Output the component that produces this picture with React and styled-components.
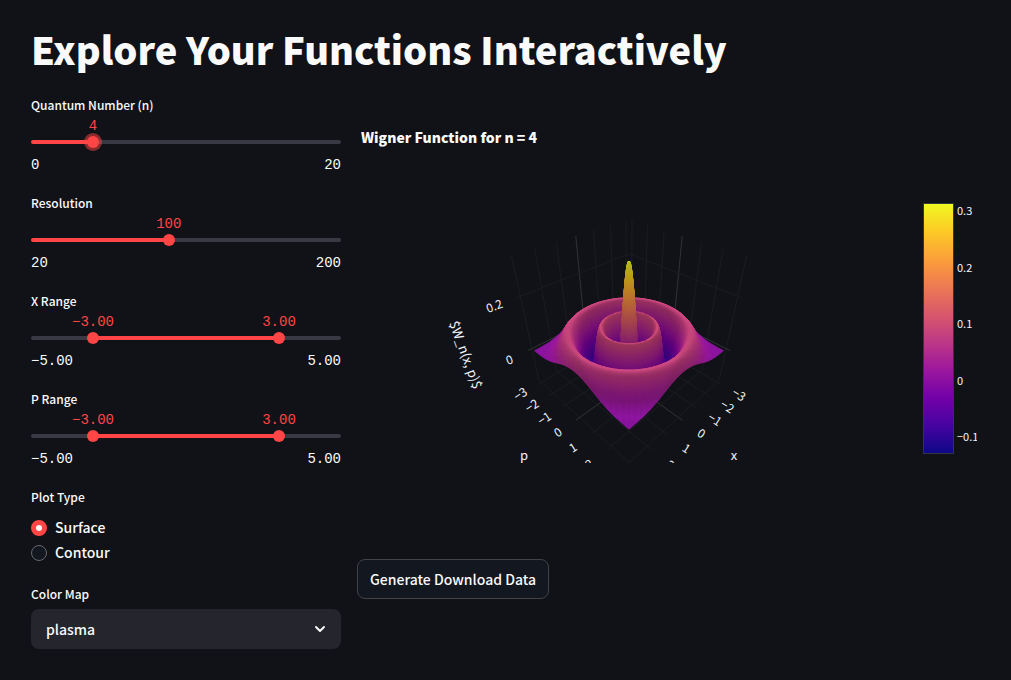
import React, { useMemo, useState } from 'react';
import styled, { createGlobalStyle, css } from 'styled-components';
import { ChevronDown } from 'lucide-react';

const GlobalStyle = createGlobalStyle`
  * {
    box-sizing: border-box;
  }
  body {
    margin: 0;
    background: #111217;
    color: #fafafa;
    font-family: "Noto Sans CJK SC", "Noto Sans", sans-serif;
    font-size: 14px;
    font-weight: 500;
  }
`;

const Page = styled.main`
  padding: 19px 34px 28px 31px;
`;

const Title = styled.h1`
  margin: 0 0 15px;
  font-size: 38px;
  font-weight: 900;
  line-height: 60px;
`;

const Columns = styled.div`
  display: grid;
  grid-template-columns: 1fr 2fr;
  gap: 16px;
`;

const Controls = styled.form`
  display: flex;
  flex-direction: column;
  gap: 18px;
`;

const Field = styled.div`
  display: flex;
  flex-direction: column;
`;

const labelStyle = css`
  padding: 0;
  font-size: 12px;
  line-height: 22px;
`;

const Label = styled.label`
  ${labelStyle}
`;

const Group = styled.fieldset`
  margin: 0;
  padding: 0;
  border: 0;
`;

const Legend = styled.legend`
  ${labelStyle}
`;

const Values = styled.div`
  position: relative;
  height: 20px;
`;

const Value = styled.output`
  position: absolute;
  top: 0;
  transform: translateX(-50%);
  color: #ff4545;
  font-family: "Liberation Mono", monospace;
  font-size: 14px;
  line-height: 20px;
`;

const Rail = styled.div`
  position: relative;
  height: 12px;
`;

const Track = styled.div`
  height: 4px;
  margin-top: 4px;
  border-radius: 2px;
`;

const Range = styled.input`
  position: absolute;
  top: 0;
  left: -6px;
  width: calc(100% + 12px);
  height: 12px;
  margin: 0;
  appearance: none;
  background: transparent;
  outline: none;
  pointer-events: none;

  &::-webkit-slider-thumb {
    appearance: none;
    width: 12px;
    height: 12px;
    border-radius: 50%;
    background: #ff4545;
    box-shadow: ${(p) => (p.$active ? '0 0 0 3px rgba(255, 69, 69, 0.5)' : 'none')};
    cursor: pointer;
    pointer-events: auto;
  }
`;

const Bounds = styled.div`
  display: flex;
  justify-content: space-between;
  margin-top: 8px;
  font-family: "Liberation Mono", monospace;
  font-size: 14px;
  line-height: 18px;
`;

const Option = styled.label`
  display: flex;
  align-items: center;
  gap: 8px;
  line-height: 25px;
  cursor: pointer;
`;

const Options = styled.div`
  padding-top: 7px;
`;

const Radio = styled.input`
  appearance: none;
  width: 16px;
  height: 16px;
  margin: 0;
  border: 1px solid #65666b;
  border-radius: 50%;
  background: #131720;

  &:checked {
    border: 5px solid #ff4545;
    background: #fafafa;
  }
`;

const SelectBox = styled.div`
  display: grid;
  align-items: center;
  margin-top: 4px;

  > * {
    grid-area: 1 / 1;
  }

  svg {
    justify-self: end;
    margin-right: 13px;
    pointer-events: none;
  }
`;

const Select = styled.select`
  appearance: none;
  width: 100%;
  height: 40px;
  padding: 0 15px;
  border: 0;
  border-radius: 8px;
  background: #24252d;
  color: inherit;
  font: inherit;
`;

const Output = styled.section`
  min-width: 0;
`;

const ChartTitle = styled.h2`
  margin: 31px 0 44px 4px;
  font-size: 14px;
  font-weight: 900;
  line-height: 24px;
`;

const Chart = styled.div`
  display: flex;
  margin-bottom: 96px;
`;

const Scene = styled.svg`
  flex: 1;
  min-width: 0;
  height: 270px;
  overflow: hidden;
  fill: #f2f5fa;
  font-weight: 400;
`;

const ColorBar = styled.svg`
  width: 76px;
  height: 270px;
  fill: #f2f5fa;
  font-size: 11px;
  font-weight: 400;
`;

const Button = styled.button`
  height: 40px;
  padding: 0 12px;
  border: 1px solid #414349;
  border-radius: 8px;
  background: #131720;
  color: inherit;
  font: inherit;
  cursor: pointer;
`;

const COLOR_MAPS = {
  plasma: ['0d0887', '46039f', '7201a8', '9c179e', 'bd3786', 'd8576b', 'ed7953', 'fb9f3a', 'fdca26', 'f0f921'],
  viridis: ['440154', '482878', '3e4989', '31688e', '26828e', '1f9e89', '35b779', '6ece58', 'b5de2b', 'fde725'],
};

const colorAt = (stops, t, light = 1, shine = 0) => {
  const pos = Math.min(Math.max(t, 0), 1) * (stops.length - 1);
  const i = Math.min(Math.floor(pos), stops.length - 2);
  const channel = (c) => {
    const a = parseInt(stops[i].slice(c, c + 2), 16);
    const b = parseInt(stops[i + 1].slice(c, c + 2), 16);
    return Math.min(255, Math.round((a + (b - a) * (pos - i)) * light + shine));
  };
  return `rgb(${channel(0)},${channel(2)},${channel(4)})`;
};

const wigner = (n, x, p) => {
  const r2 = x * x + p * p;
  const u = 2 * r2;
  let prev = 1;
  let cur = n === 0 ? 1 : 1 - u;
  for (let k = 1; k < n; k++) {
    [prev, cur] = [cur, ((2 * k + 1 - u) * cur - k * prev) / (k + 1)];
  }
  return ((n % 2 ? -1 : 1) / Math.PI) * Math.exp(-r2) * cur;
};

// perspective camera at (1.25, 1.25, 1.25) looking at the middle of a unit box
const EYE = 1.25 * Math.sqrt(3);
const FOCAL = 135 / Math.tan(Math.PI / 8);
const FILL = 0.935;

const project = (x, y, z) => {
  const s = FOCAL / (EYE - (x + y + z) / Math.sqrt(3));
  return [(s * (y - x)) / Math.SQRT2, (-s * (2 * z - x - y)) / Math.sqrt(6)];
};

const toPoints = (corners) => corners.map((c) => c.map((v) => v.toFixed(2)).join(',')).join(' ');

const buildSurface = (n, size, xRange, pRange) => {
  // u and v run from 0 to 1 over the two ranges
  const at = (u, v) =>
    wigner(n, xRange[0] + (xRange[1] - xRange[0]) * u, pRange[0] + (pRange[1] - pRange[0]) * v);
  let min = Infinity;
  let max = -Infinity;
  for (let i = 0; i < size; i++) {
    for (let j = 0; j < size; j++) {
      const w = at(i / (size - 1), j / (size - 1));
      min = Math.min(min, w);
      max = Math.max(max, w);
    }
  }
  return { at, size, min, max };
};

const Line = ({ from, to, zero }) => {
  const a = project(...from);
  const b = project(...to);
  return (
    <line x1={a[0]} y1={a[1]} x2={b[0]} y2={b[1]} stroke={zero ? '#303235' : '#1b1c20'} strokeWidth={1} />
  );
};

const TickText = ({ at, angle, size = 12, children }) => (
  <text
    transform={`translate(${at[0].toFixed(1)} ${at[1].toFixed(1)}) rotate(${angle})`}
    textAnchor="middle"
    dy="4"
    fontSize={size}
  >
    {children}
  </text>
);

const WignerPlot = ({ surface, stops, xRange, pRange, flat }) => {
  const { at, size, min, max } = surface;
  const level = (w) => ((w - (min + max) / 2) / (max - min)) * FILL;

  const cells = useMemo(() => {
    const list = [];
    const addCell = (u, v, d) => {
      const w = [at(u, v), at(u + d, v), at(u + d, v + d), at(u, v + d)];
      const z = w.map(level);
      const step = d * FILL;
      const x = (u - 0.5) * FILL;
      const y = (v - 0.5) * FILL;
      const corners = [[x, y], [x + step, y], [x + step, y + step], [x, y + step]];
      const dx = (z[1] + z[2] - z[0] - z[3]) / (2 * step);
      const dy = (z[2] + z[3] - z[0] - z[1]) / (2 * step);
      const up = Math.max(0, (dx + dy + 2) / Math.sqrt(6) / Math.hypot(dx, dy, 1));
      const mean = (w[0] + w[1] + w[2] + w[3]) / 4;
      list.push({
        points: toPoints(corners.map(([a, b], k) => (flat ? [a * 260, -b * 260] : project(a, b, z[k])))),
        color: colorAt(
          stops,
          (mean - min) / (max - min),
          flat ? 1 : Math.min(1, 0.75 + 0.4 * up),
          flat ? 0 : 8 * up
        ),
      });
    };

    const step = 1 / (size - 1);
    for (let i = 0; i < size - 1; i++) {
      for (let j = 0; j < size - 1; j++) {
        const u = i * step;
        const v = j * step;
        const z = [at(u, v), at(u + step, v), at(u + step, v + step), at(u, v + step)].map(level);
        // steep cells are split so that their colour stays smooth
        const rise = (Math.max(...z) - Math.min(...z)) * 150;
        const parts = flat ? 1 : Math.min(5, Math.max(1, Math.ceil(rise / 2)));
        for (let a = 0; a < parts; a++) {
          for (let b = 0; b < parts; b++) {
            addCell(u + (a * step) / parts, v + (b * step) / parts, step / parts);
          }
        }
      }
    }
    return list;
  }, [surface, stops, flat]);

  const ticksOf = (range) => {
    const out = [];
    for (let t = Math.ceil(range[0]); t <= range[1]; t++) {
      out.push({ t, v: ((t - range[0]) / (range[1] - range[0]) - 0.5) * FILL });
    }
    return out;
  };
  const xTicks = ticksOf(xRange);
  const pTicks = ticksOf(pRange);
  const zTicks = [-0.2, 0, 0.2].map((t) => ({ t, v: level(t) })).filter(({ v }) => Math.abs(v) < 0.5);
  // labels that would start below the scene are left out
  const visible = (tick) => project(0.65, tick.v, -0.5)[1] < 140;

  return (
    <Scene viewBox="-272 -135 544 270" role="img" aria-label="Wigner function plot">
      {!flat && (
        <g>
          {xTicks.map(({ t, v }) => (
            <g key={t}>
              <Line from={[v, -0.5, -0.5]} to={[v, 0.5, -0.5]} zero={t === 0} />
              <Line from={[v, -0.5, -0.5]} to={[v, -0.5, 0.5]} zero={t === 0} />
            </g>
          ))}
          {pTicks.map(({ t, v }) => (
            <g key={t}>
              <Line from={[-0.5, v, -0.5]} to={[0.5, v, -0.5]} zero={t === 0} />
              <Line from={[-0.5, v, -0.5]} to={[-0.5, v, 0.5]} zero={t === 0} />
            </g>
          ))}
          {zTicks.map(({ t, v }) => (
            <g key={t}>
              <Line from={[0.5, -0.5, v]} to={[-0.5, -0.5, v]} zero={t === 0} />
              <Line from={[-0.5, 0.5, v]} to={[-0.5, -0.5, v]} zero={t === 0} />
            </g>
          ))}
        </g>
      )}
      <g strokeWidth={0.4}>
        {cells.map((c, i) => (
          <polygon key={i} points={c.points} fill={c.color} stroke={c.color} />
        ))}
      </g>
      {!flat && (
        <g>
          {xTicks.filter(visible).map(({ t, v }) => (
            <TickText key={t} at={project(v, 0.65, -0.5)} angle={33}>{String(t).replace('-', '−')}</TickText>
          ))}
          {pTicks.filter(visible).map(({ t, v }) => (
            <TickText key={t} at={project(0.64, v, -0.5)} angle={-33}>{String(t).replace('-', '−')}</TickText>
          ))}
          {zTicks.map(({ t, v }) => (
            <TickText key={t} at={project(0.64, -0.5, v)} angle={-20}>{t}</TickText>
          ))}
          <TickText at={[105, 128]} angle={0} size={13}>x</TickText>
          <TickText at={[-105, 128]} angle={0} size={13}>p</TickText>
          <TickText at={[-164, 27]} angle={70} size={13}>$W_n(x, p)$</TickText>
        </g>
      )}
    </Scene>
  );
};

const Scale = ({ min, max, stops }) => {
  const ticks = [-0.3, -0.2, -0.1, 0, 0.1, 0.2, 0.3].filter((t) => t >= min && t <= max);
  return (
    <ColorBar viewBox="0 0 76 270">
      <defs>
        <linearGradient id="scale" x1="0" y1="1" x2="0" y2="0">
          {stops.map((c, i) => (
            <stop key={c} offset={i / (stops.length - 1)} stopColor={`#${c}`} />
          ))}
        </linearGradient>
      </defs>
      <rect x="22.5" y="10.5" width="30" height="250" fill="url(#scale)" stroke="#34363f" />
      {ticks.map((t) => (
        <text key={t} x="56" y={265 - ((t - min) / (max - min)) * 250}>
          {String(t).replace('-', '−')}
        </text>
      ))}
    </ColorBar>
  );
};

const Slider = ({ id, label, min, max, step = 1, digits = 0, values, onChange, active }) => {
  const percent = (v) => ((v - min) / (max - min)) * 100;
  const start = values.length > 1 ? percent(values[0]) : 0;
  const end = percent(values[values.length - 1]);
  const fill = `linear-gradient(to right, #383943 ${start}%, #ff4545 ${start}%, #ff4545 ${end}%, #383943 ${end}%)`;

  return (
    <Field>
      <Label htmlFor={`${id}-0`}>{label}</Label>
      <Values>
        {values.map((v, i) => (
          <Value key={i} htmlFor={`${id}-${i}`} style={{ left: `${percent(v)}%` }}>
            {v.toFixed(digits).replace('-', '−')}
          </Value>
        ))}
      </Values>
      <Rail>
        <Track style={{ background: fill }} />
        {values.map((v, i) => (
          <Range
            key={i}
            id={`${id}-${i}`}
            type="range"
            aria-label={i ? `${label} end` : label}
            min={min}
            max={max}
            step={step}
            value={v}
            $active={active}
            onChange={(e) => {
              const next = [...values];
              next[i] = Number(e.target.value);
              if (next.length === 1 || next[0] < next[1]) onChange(next);
            }}
          />
        ))}
      </Rail>
      <Bounds>
        <span>{min.toFixed(digits).replace('-', '−')}</span>
        <span>{max.toFixed(digits)}</span>
      </Bounds>
    </Field>
  );
};

const App = () => {
  const [n, setN] = useState([4]);
  const [resolution, setResolution] = useState([100]);
  const [xRange, setXRange] = useState([-3, 3]);
  const [pRange, setPRange] = useState([-3, 3]);
  const [plotType, setPlotType] = useState('Surface');
  const [colorMap, setColorMap] = useState('plasma');

  const surface = useMemo(
    () => buildSurface(n[0], resolution[0], xRange, pRange),
    [n, resolution, xRange, pRange]
  );
  const stops = COLOR_MAPS[colorMap];

  return (
    <Page>
      <GlobalStyle />
      <Title>Explore Your Functions Interactively</Title>
      <Columns>
        <Controls>
          <Slider id="n" label="Quantum Number (n)" min={0} max={20} values={n} onChange={setN} active />
          <Slider id="resolution" label="Resolution" min={20} max={200} values={resolution} onChange={setResolution} />
          <Slider id="x" label="X Range" min={-5} max={5} step={0.1} digits={2} values={xRange} onChange={setXRange} />
          <Slider id="p" label="P Range" min={-5} max={5} step={0.1} digits={2} values={pRange} onChange={setPRange} />
          <Group>
            <Legend>Plot Type</Legend>
            <Options>
              {['Surface', 'Contour'].map((type) => (
                <Option key={type}>
                  <Radio
                    type="radio"
                    name="plot-type"
                    value={type}
                    checked={plotType === type}
                    onChange={() => setPlotType(type)}
                  />
                  {type}
                </Option>
              ))}
            </Options>
          </Group>
          <Field>
            <Label htmlFor="color-map">Color Map</Label>
            <SelectBox>
              <Select id="color-map" value={colorMap} onChange={(e) => setColorMap(e.target.value)}>
                {Object.keys(COLOR_MAPS).map((name) => (
                  <option key={name}>{name}</option>
                ))}
              </Select>
              <ChevronDown size={16} strokeWidth={3} aria-hidden="true" />
            </SelectBox>
          </Field>
        </Controls>
        <Output>
          <ChartTitle>Wigner Function for n = {n[0]}</ChartTitle>
          <Chart>
            <WignerPlot
              surface={surface}
              stops={stops}
              xRange={xRange}
              pRange={pRange}
              flat={plotType === 'Contour'}
            />
            <Scale min={surface.min} max={surface.max} stops={stops} />
          </Chart>
          <Button type="button">Generate Download Data</Button>
        </Output>
      </Columns>
    </Page>
  );
};

export default App;
